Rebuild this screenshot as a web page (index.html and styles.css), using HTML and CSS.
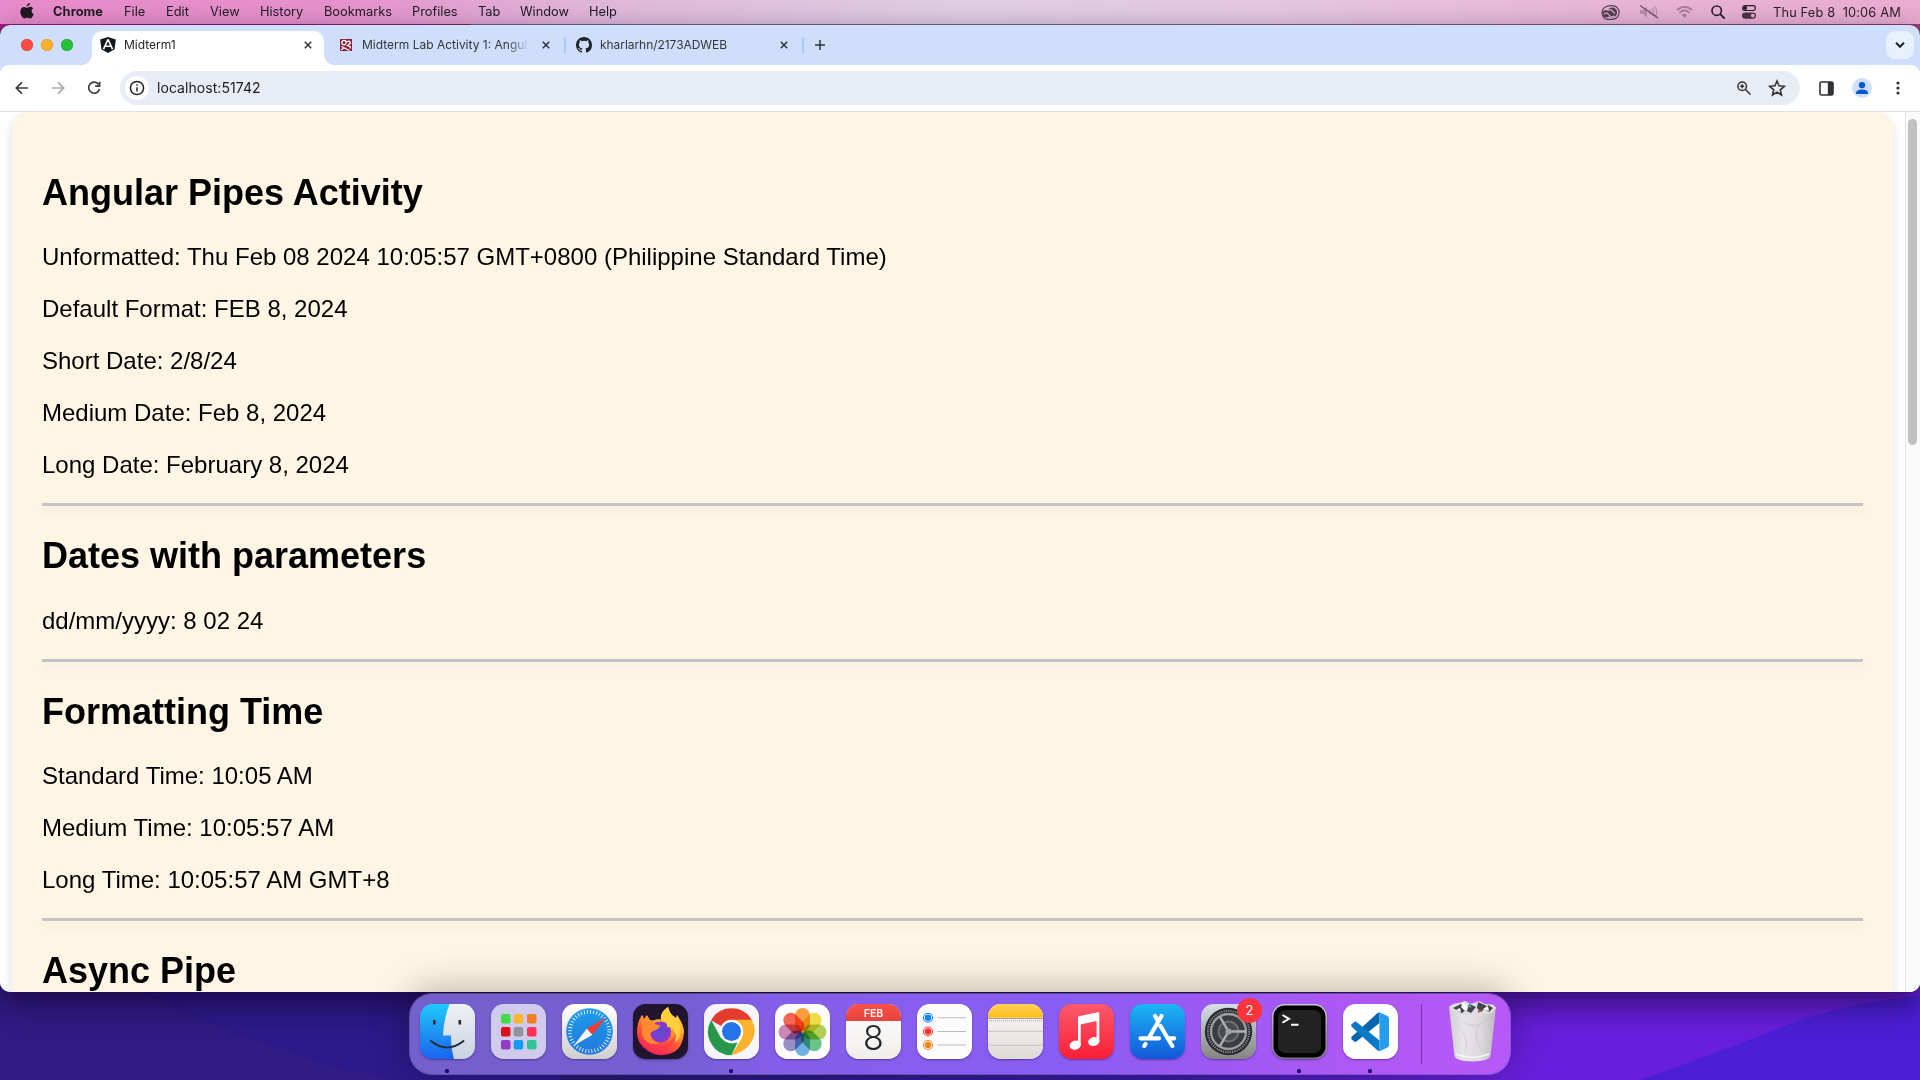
FILE: index.html
```html
<!DOCTYPE html>
<html lang="en">
<head>
<meta charset="utf-8">
<title>Midterm1</title>
<link rel="stylesheet" href="styles.css">
</head>
<body>
<svg class="wallpaper" viewBox="0 0 1920 90" preserveAspectRatio="none" aria-hidden="true">
  <path d="M0 0H140Q230 50 400 90H0z" fill="#311b85"/>
  <path d="M140 0Q230 42 330 76L400 90H560V0z" fill="#2c1a8a"/>
  <path d="M1500 0H1920V6Q1850 12 1790 34Q1720 62 1640 90H1500z" fill="#681fdc"/>
  <path d="M1920 6Q1850 12 1790 34Q1720 62 1640 90H1920z" fill="#4b1fd6"/>
</svg>

<header class="menubar">
  <nav class="menus">
    <svg class="apple" viewBox="0 0 14 16"><path d="M9.9 0c.1 1.500-1.400 3.200-3 3.200C6.700 1.700 8.300.2 9.900 0zM13.200 5.400c-2.300 1.400-1.900 4.500.5 5.500-.6 1.900-2 4.600-3.600 4.600-1.100 0-1.500-.7-2.800-.7s-1.800.7-2.800.7C2.300 15.500.300 11.500.300 8.600c0-3 1.900-4.700 3.800-4.700 1.200 0 2.200.8 3 .8.700 0 1.900-.9 3.400-.9 1.100 0 2.100.6 2.700 1.600z"/></svg>
    <b>Chrome</b><span>File</span><span>Edit</span><span>View</span><span>History</span><span>Bookmarks</span><span>Profiles</span><span>Tab</span><span>Window</span><span>Help</span>
  </nav>
  <div class="status">
    <svg class="cc" viewBox="0 0 21 15"><path d="M7.500 14.300a6.800 6.800 0 0 1-.6-12.500Q9.500.7 13.300.7a6.800 6.800 0 0 1 0 13.600z" fill="none" stroke="currentColor" stroke-width="1.200"/><circle cx="13.200" cy="7.500" r="4.900" fill="currentColor"/><circle cx="7.300" cy="8.800" r="3.700" fill="currentColor"/><path d="M4.800 9.700q1.500-3 4-1l2.500 2.400q2.500 1.500 4-.5M8.500 6q2-2.500 4.500-.3l3 2.800" fill="none" stroke="#e8b8d6" stroke-width="1.100"/></svg>
    <svg class="mute" viewBox="0 0 20 14"><path d="M1 5h3l4-3.500v11L4 9H1z" fill="#b88fab"/><path d="M10.500 4.500q2 2.500 0 5M13 3q3 4 0 8M15.500 1.500q4.500 5.500 0 11" fill="none" stroke="#b88fab" stroke-width="1.300"/><path d="M1 .5l18 12.500" stroke="#66495f" stroke-width="1.100"/></svg>
    <svg class="wifi" viewBox="0 0 17 12"><path d="M1 4Q8.500-2.500 16 4M3.500 6.700q5-4.200 10 0" fill="none" stroke="#a67f9b" stroke-width="1.900"/><path d="M5.800 9q2.700-2.400 5.400 0L8.500 11.800z" fill="#a67f9b"/></svg>
    <svg class="search" viewBox="0 0 14 14"><circle cx="5.700" cy="5.700" r="4.700" fill="none" stroke="currentColor" stroke-width="1.600"/><path d="M9.200 9.200l4 4" stroke="currentColor" stroke-width="1.800" stroke-linecap="round"/></svg>
    <svg class="control" viewBox="0 0 14 14"><rect x=".6" y=".6" width="12.800" height="4.900" rx="2.450" fill="none" stroke="currentColor" stroke-width="1.200"/><circle cx="3.200" cy="3" r="2" fill="currentColor"/><rect y="7.500" width="14" height="6.200" rx="3.100" fill="#4a3444"/><circle cx="10.800" cy="10.600" r="1.900" fill="#e9b1d0"/></svg>
    <time>Thu Feb 8&nbsp; 10:06 AM</time>
  </div>
</header>

<main class="window">
  <div class="tabstrip">
    <div class="lights"><i class="red"></i><i class="amber"></i><i class="green"></i></div>
    <div class="tab active">
      <svg class="favicon" viewBox="0 0 16 16"><path d="M8 0l7.800 2.600-1.200 9.600L8 16l-6.600-3.800L.2 2.600z" fill="#11161b"/><path d="M8 2.300L3.500 12.200M8 2.300l4.500 9.900M5.200 9.200h5.600" fill="none" stroke="#fff" stroke-width="1.600"/></svg>
      <span class="title">Midterm1</span>
      <svg class="close" viewBox="0 0 8 8"><path d="M.8.8l6.400 6.400M7.200.8L.8 7.200"/></svg>
    </div>
    <div class="tab second">
      <svg class="favicon small" viewBox="0 0 12 12"><path fill="#8a1f37" d="M0 0h12v12H0z"/><circle cx="4" cy="3.600" r="2.200" fill="none" stroke="#fff" stroke-width="1.300"/><path d="M1.500 7.500l8 4M6.500 3q3-2 4 1l-3 2.500q3 0 3 3M1 11l3-2" fill="none" stroke="#fff" stroke-width="1.300"/></svg>
      <span class="title fade">Midterm Lab Activity 1: Angul</span>
      <svg class="close" viewBox="0 0 8 8"><path d="M.8.8l6.400 6.400M7.200.8L.8 7.200"/></svg>
    </div>
    <i class="divider"></i>
    <div class="tab third">
      <svg class="favicon" viewBox="0 0 16 16"><path fill="#1f2328" d="M8 0C3.580 0 0 3.580 0 8c0 3.540 2.290 6.530 5.470 7.590.4.070.55-.17.55-.38 0-.19-.01-.82-.01-1.490-2.010.37-2.530-.49-2.690-.94-.09-.23-.48-.94-.82-1.130-.28-.15-.68-.52-.01-.53.63-.01 1.080.58 1.230.82.72 1.210 1.870.87 2.330.66.07-.52.28-.87.51-1.070-1.780-.2-3.640-.89-3.640-3.950 0-.87.31-1.590.82-2.150-.08-.2-.36-1.020.08-2.120 0 0 .67-.21 2.200.82a7.600 7.600 0 0 1 4 0c1.530-1.040 2.200-.82 2.200-.82.44 1.100.16 1.920.08 2.120.51.56.82 1.270.82 2.150 0 3.070-1.870 3.750-3.650 3.950.29.25.54.73.54 1.480 0 1.070-.01 1.930-.01 2.200 0 .21.15.46.55.38A8 8 0 0 0 16 8c0-4.420-3.580-8-8-8z"/></svg>
      <span class="title">kharlarhn/2173ADWEB</span>
      <svg class="close" viewBox="0 0 8 8"><path d="M.8.8l6.400 6.400M7.200.8L.8 7.200"/></svg>
    </div>
    <i class="divider"></i>
    <svg class="plus" viewBox="0 0 10 10"><path d="M5 0v10M0 5h10"/></svg>
    <div class="tabsearch"><svg viewBox="0 0 10 6"><path d="M1 .8l4 4 4-4"/></svg></div>
  </div>

  <div class="toolbar">
    <div class="navbtns">
      <svg viewBox="0 0 14 14"><path d="M13 7H1.500M7 1.300L1.300 7 7 12.700"/></svg>
      <svg class="off" viewBox="0 0 14 14"><path d="M1 7h11.500M7 1.300L12.700 7 7 12.700"/></svg>
      <svg viewBox="0 0 14 14"><path d="M11.700 3.600A5.500 5.500 0 1 0 12.500 8M12.600.8v4.400H8.200"/></svg>
    </div>
    <div class="omnibox">
      <span class="info"><svg viewBox="0 0 16 16"><circle cx="8" cy="8" r="6.600" fill="none" stroke="#222" stroke-width="1.500"/><path d="M8 7.200v4.300M8 4.300v1.500" stroke="#222" stroke-width="1.500"/></svg></span>
      <span class="url">localhost:51742</span>
      <svg class="zoomicon" viewBox="0 0 14 14"><circle cx="5.200" cy="5.200" r="4.300"/><path d="M8.500 8.500l5 5M5.200 3.200v4M3.200 5.200h4"/></svg>
      <svg class="star" viewBox="0 0 16 16"><path d="M8 1.800l1.800 4.300 4.700.4-3.600 3.100 1.100 4.600L8 11.700l-4 2.500 1.100-4.600L1.500 6.500l4.700-.4z"/></svg>
    </div>
    <svg class="panel" viewBox="0 0 15 15"><rect x="1" y="1" width="13" height="13" rx="1.500" fill="none" stroke="#303235" stroke-width="1.600"/><path d="M8.800 1H14v13H8.800z" fill="#303235"/></svg>
    <svg class="avatar" viewBox="0 0 20 20"><circle cx="10" cy="10" r="10" fill="#cfe0fb"/><circle cx="10" cy="7.100" r="3.200" fill="#0b57d0"/><path d="M4 15.900v-1.500Q5 11.500 10 11.500t6 2.900v1.500z" fill="#0b57d0"/></svg>
    <svg class="kebab" viewBox="0 0 4 14"><circle cx="2" cy="2" r="1.600"/><circle cx="2" cy="7" r="1.600"/><circle cx="2" cy="12" r="1.600"/></svg>
  </div>

  <div class="viewport">
    <div class="page">
      <article class="card">
        <h2>Angular Pipes Activity</h2>
        <p>Unformatted: Thu Feb 08 2024 10:05:57 GMT+0800 (Philippine Standard Time)</p>
        <p>Default Format: FEB 8, 2024</p>
        <p>Short Date: 2/8/24</p>
        <p>Medium Date: Feb 8, 2024</p>
        <p>Long Date: February 8, 2024</p>
        <hr>
        <h2>Dates with parameters</h2>
        <p>dd/mm/yyyy: 8 02 24</p>
        <hr>
        <h2>Formatting Time</h2>
        <p>Standard Time: 10:05 AM</p>
        <p>Medium Time: 10:05:57 AM</p>
        <p>Long Time: 10:05:57 AM GMT+8</p>
        <hr>
        <h2>Async Pipe</h2>
      </article>
    </div>
    <div class="scrollbar"><i></i></div>
  </div>
</main>

<footer class="dock">
  <div class="app running">
    <svg viewBox="0 0 55 55">
      <defs><linearGradient id="fb" x2="0" y2="1"><stop stop-color="#21c8f8"/><stop offset="1" stop-color="#1a63ee"/></linearGradient><linearGradient id="fw" x2="0" y2="1"><stop stop-color="#f1f1f5"/><stop offset="1" stop-color="#c9d3e0"/></linearGradient><clipPath id="r"><rect width="55" height="55" rx="12.500"/></clipPath></defs>
      <g clip-path="url(#r)"><path fill="url(#fb)" d="M0 0h55v55H0z"/><path fill="url(#fw)" d="M29.500 0Q23.500 16 23 31.500h8Q31 44 34 55h21V0z"/></g>
      <path d="M14.300 16v4.500M39.800 16v4.500" stroke="#222c36" stroke-width="2.600"/><path d="M11 37q16 13 32.500 0" fill="none" stroke="#222c36" stroke-width="2" stroke-linecap="round"/>
    </svg>
  </div>
  <div class="app">
    <svg viewBox="0 0 55 55"><rect width="55" height="55" rx="12.500" fill="#d0cbec"/>
      <g><rect x="10" y="10" width="9.500" height="9.500" rx="2" fill="#42dc48"/><rect x="22.700" y="10" width="9.500" height="9.500" rx="2" fill="#fab62c"/><rect x="36" y="10" width="9.500" height="9.500" rx="2" fill="#f17e25"/><rect x="10" y="23" width="9.500" height="9.500" rx="2" fill="#d91217"/><rect x="22.700" y="23" width="9.500" height="9.500" rx="2" fill="#8f9699"/><rect x="36" y="23" width="9.500" height="9.500" rx="2" fill="#fc3155"/><rect x="10" y="36" width="9.500" height="9.500" rx="2" fill="#943bc5"/><rect x="22.700" y="36" width="9.500" height="9.500" rx="2" fill="#139bf0"/><rect x="36" y="36" width="9.500" height="9.500" rx="2" fill="#32c497"/></g></svg>
  </div>
  <div class="app">
    <svg viewBox="0 0 55 55"><defs><linearGradient id="sg" x2="0" y2="1"><stop stop-color="#fff"/><stop offset="1" stop-color="#cfcfcf"/></linearGradient><linearGradient id="sb" x2="0" y2="1"><stop stop-color="#1d9bea"/><stop offset="1" stop-color="#2378dc"/></linearGradient></defs>
      <rect width="55" height="55" rx="12.500" fill="url(#sg)"/><circle cx="27.500" cy="27.500" r="23.300" fill="url(#sb)"/><circle cx="27.500" cy="27.500" r="19.700" fill="none" stroke="#e7f4fd" stroke-width="3.800" stroke-dasharray=".9 2.195"/>
      <path d="M12 41.500l18.500-10.800-5.700-6.200z" fill="#f6f6f6"/><path d="M44 13.500L24.800 24.500l5.700 6.200z" fill="#ef3c35"/></svg>
  </div>
  <div class="app">
    <svg viewBox="0 0 55 55"><defs><linearGradient id="ff" x1=".8" y1="0" x2=".3" y2="1"><stop stop-color="#ffe043"/><stop offset=".35" stop-color="#ffad2c"/><stop offset=".65" stop-color="#ff5535"/><stop offset="1" stop-color="#f51b62"/></linearGradient><radialGradient id="fp"><stop stop-color="#574bd6"/><stop offset="1" stop-color="#8f36c9"/></radialGradient></defs>
      <rect width="55" height="55" rx="12.500" fill="#20142f"/>
      <path d="M4 28Q4 18 9 11q1 .5 2 4l3-4 3 5 3 .5q5-2 8-1-1-7 7-12.500 2 8 8 11l1-3q7 10 7 17-1 15-10 20-13 7-26-1Q4 40 4 28z" fill="url(#ff)"/>
      <circle cx="27.500" cy="28" r="10.500" fill="url(#fp)"/>
      <path d="M9 16q8 4 18 5 0 4-7 6-4 2-2 6 2 5 9 6-13 4-18-8z" fill="#ff8a32"/>
      <path d="M28 15.500Q27 8 35 3q2 8 8 11 6 8 4 17-1 5-5 7 2-9-3-14-2-1-5-1 1-5-6-7.500z" fill="#ffcf3e"/>
      <path d="M5 30q4 13 17 12 15 1 21-13 0 17-17 19Q11 49 5 30z" fill="#fc384a" opacity=".6"/></svg>
  </div>
  <div class="app running">
    <svg viewBox="0 0 55 55"><rect width="55" height="55" rx="12.500" fill="#f6f5fb"/>
      <path d="M27.500 28L7.100 16.200a23.500 23.500 0 0 1 40.800 0z" fill="#e33b2e"/><path d="M27.500 51.300A23.500 23.500 0 0 1 7.200 16l9.800 18 10.500 5.600 6-1z" fill="#29974b"/><path d="M27.500 15.800h20.400q2.900 5.500 2.900 12Q48 46 27.500 51.300l10.600-17.500z" fill="#fcb22d"/><circle cx="27.500" cy="27.500" r="11.800" fill="#fff"/><circle cx="27.500" cy="27.500" r="9.500" fill="#2473e8"/></svg>
  </div>
  <div class="app">
    <svg viewBox="0 0 55 55"><rect width="55" height="55" rx="12.500" fill="#fdfdfd"/>
      <g class="petals"><rect x="20" y="4" width="15" height="23.500" rx="7.500" fill="#fb9325"/><rect x="20" y="4" width="15" height="23.500" rx="7.500" fill="#eddb2f" transform="rotate(45 27.500 28)"/><rect x="20" y="4" width="15" height="23.500" rx="7.500" fill="#abcc3d" transform="rotate(90 27.500 28)"/><rect x="20" y="4" width="15" height="23.500" rx="7.500" fill="#59bd78" transform="rotate(135 27.500 28)"/><rect x="20" y="4" width="15" height="23.500" rx="7.500" fill="#5da9df" transform="rotate(180 27.500 28)"/><rect x="20" y="4" width="15" height="23.500" rx="7.500" fill="#8a80c2" transform="rotate(225 27.500 28)"/><rect x="20" y="4" width="15" height="23.500" rx="7.500" fill="#c679ad" transform="rotate(270 27.500 28)"/><rect x="20" y="4" width="15" height="23.500" rx="7.500" fill="#f8513f" transform="rotate(315 27.500 28)"/></g></svg>
  </div>
  <div class="app calendar"><span class="month">FEB</span><span class="day">8</span></div>
  <div class="app">
    <svg viewBox="0 0 55 55"><rect width="55" height="55" rx="12.500" fill="#fcfcfc"/><g stroke="#b9bbc1" stroke-width="1"><path d="M20.500 13.800H49M20.500 27.500H49M20.500 41H49"/></g>
      <g fill="none" stroke-width="1.100"><circle cx="11" cy="13.800" r="4.500" stroke="#1184fa"/><circle cx="11" cy="27.500" r="4.500" stroke="#f5413a"/><circle cx="11" cy="41" r="4.500" stroke="#f08b2a"/></g><circle cx="11" cy="13.800" r="3.200" fill="#1184fa"/><circle cx="11" cy="27.500" r="3.200" fill="#f5332f"/><circle cx="11" cy="41" r="3.200" fill="#ee8421"/></svg>
  </div>
  <div class="app">
    <svg viewBox="0 0 55 55"><defs><linearGradient id="ny" x2="0" y2="1"><stop stop-color="#ffd157"/><stop offset="1" stop-color="#ffbc1c"/></linearGradient><linearGradient id="nw" x2="0" y2="1"><stop stop-color="#fbfafa"/><stop offset="1" stop-color="#dedad8"/></linearGradient></defs><g clip-path="url(#r)"><path fill="url(#nw)" d="M0 0h55v55H0z"/><path fill="url(#ny)" d="M0 0h55v13.800H0z"/><path d="M0 14.500h55" stroke="#a6a29a" stroke-width="1"/><path d="M1 16.800h53" stroke="#bdbbb8" stroke-width="1.400" stroke-dasharray="1 1"/><path d="M0 27.300h55M0 41.300h55" stroke="#c6c3c1"/></g></svg>
  </div>
  <div class="app">
    <svg viewBox="0 0 55 55"><defs><linearGradient id="mu" x2="0" y2="1"><stop stop-color="#fb5a6c"/><stop offset="1" stop-color="#fa1f35"/></linearGradient></defs><rect width="55" height="55" rx="12.500" fill="url(#mu)"/><path d="M19 13.500q0-1 1-1.300L39 8.200q1.300-.2 1.300 1V37.500h-2.700V17L21.700 20.500V41H19z" fill="#fff"/><ellipse cx="16.200" cy="41.200" rx="5.700" ry="4.500" fill="#fff" transform="rotate(-15 16.200 41.200)"/><ellipse cx="34.800" cy="37.500" rx="5.700" ry="4.500" fill="#fff" transform="rotate(-15 34.800 37.500)"/></svg>
  </div>
  <div class="app">
    <svg viewBox="0 0 55 55"><defs><linearGradient id="as" x2="0" y2="1"><stop stop-color="#1cb6f3"/><stop offset="1" stop-color="#1257d8"/></linearGradient></defs><rect width="55" height="55" rx="12.500" fill="url(#as)"/><g stroke="#fff" stroke-width="4.200" stroke-linecap="round"><path d="M31.500 12L19 33.700M25 12l2.400 4.200M30.500 22l11.800 20M10.500 34.300H29M37.500 34.300h6.700M15.500 40l-1.200 2"/></g></svg>
  </div>
  <div class="app">
    <svg viewBox="0 0 55 55"><defs><linearGradient id="se" x2="0" y2="1"><stop stop-color="#d4dfe7"/><stop offset="1" stop-color="#858483"/></linearGradient></defs><rect width="55" height="55" rx="12.500" fill="url(#se)"/><circle cx="27.500" cy="27.500" r="23.700" fill="#292a2d"/><circle cx="27.500" cy="27.500" r="20.700" fill="none" stroke="#8b8d90" stroke-width="2" stroke-dasharray="1.200 1.100"/><circle cx="27.500" cy="27.500" r="17.500" fill="#3a3c3f" stroke="#999b9e" stroke-width="2.400"/><circle cx="27.500" cy="27.500" r="10" fill="#4b4c50" stroke="#6d6f72" stroke-width="2"/><path d="M27.500 27.500H45M27.500 27.500L18.700 12.500M27.500 27.500L18.700 42.500" stroke="#b0b1b3" stroke-width="2.400"/><circle cx="27.500" cy="27.500" r="3" fill="#a0a1a4"/></svg>
    <span class="badge">2</span>
  </div>
  <div class="app running">
    <svg viewBox="0 0 55 55"><defs><linearGradient id="te" x2="0" y2="1"><stop stop-color="#c5ccd3"/><stop offset="1" stop-color="#777a7a"/></linearGradient></defs><rect width="55" height="55" rx="12.500" fill="url(#te)"/><rect x="1.500" y="1.500" width="52" height="52" rx="11" fill="#030303"/><rect x="6" y="6" width="43" height="43" rx="7" fill="#222"/><path d="M10.500 11l6.500 3.800-6.500 3.800M19 20.700h7.500" fill="none" stroke="#fff" stroke-width="2"/></svg>
  </div>
  <div class="app running">
    <svg viewBox="0 0 55 55"><rect width="55" height="55" rx="12.500" fill="#fff"/><path d="M36.500 8.500V19L13.500 37.500q-1.200.8-2.300 0L8.700 35.200q-1.100-1.200 0-2.400L34 9.500q1.200-1 2.500-1z" fill="#0766ad"/><path d="M36.500 47V36.500L13.500 18q-1.200-.8-2.300 0l-2.500 2.300q-1.100 1.200 0 2.400L34 46q1.200 1 2.500 1z" fill="#097ac8"/><path d="M34 9.500q1.300-1.700 3.500-.800l7 3.400q1.500.8 1.500 2.400v26.500q0 1.600-1.500 2.400l-7 3.400q-2.200.9-3.500-.800 2 1 2.500-1.500V11q-.5-2.500-2.500-1.500z" fill="#269cee"/></svg>
  </div>
  <i class="rule"></i>
  <div class="trash">
    <svg viewBox="0 0 49 62"><defs><linearGradient id="tr"><stop stop-color="#cfccd1"/><stop offset=".3" stop-color="#e8e6e8"/><stop offset=".7" stop-color="#dad8da"/><stop offset="1" stop-color="#bdb9c0"/></linearGradient></defs><path d="M1 7q23 8 47 0l-5.500 49Q41 61 24.500 61.500 8 61 6.500 56z" fill="url(#tr)"/><path d="M1 7Q5 3 11 3l6-2 6 3 8-3 6 3 8 .5 3 3-3 5q-20 5-41 0z" fill="#dddbde"/><path d="M5 8l8-4 5 6-4 3zM21 4l7 3-5 6-4-2zM30 2l9 4-6 6-4-4zM40 5l5 3-4 4-3-2z" fill="#43454c"/><path d="M15 3l6 3-4 5-4-4zM35 9l5-3 1 5zM8 10l4-2 1 4z" fill="#fff"/><path d="M18 6l4-1 2 3z" fill="#3eb4a6"/><path d="M30 9l4 2-4 2z" fill="#ba5c4b"/><path d="M15 22q13 8 24-3M14 31q7 10 3 22M31 24q-7 16 4 27" fill="none" stroke="#c3bfc4" stroke-width="2" opacity=".35"/><path d="M8 54q16 7 33 0" fill="none" stroke="#f7f6f7" stroke-width="1.500"/></svg>
  </div>
</footer>
</body>
</html>
```
FILE: styles.css
```css
* { box-sizing: border-box; }
html, body { margin: 0; height: 100%; overflow: hidden; }
body {
  position: relative;
  display: flex;
  flex-direction: column;
  align-items: center;
  background: linear-gradient(90deg, #a01c86 0, #8c2468 22%, #8e3040 24.400%, #777086 24.600%, #84718f 60%, #8d5a7d 85%, #9d3c74 100%) top / 100% 40px no-repeat, linear-gradient(90deg, #2e1a88, #241973 30%, #3b1aa4 60%, #6c1fdd 80%, #6420df);
  font-family: Inter, "Noto Sans", sans-serif;
  font-size: 13px;
  color: #1d1a20;
}
.wallpaper { position: absolute; left: 0; bottom: 0; width: 1920px; height: 90px; }
svg { display: block; flex: none; }

/* menu bar */
.menubar {
  width: 100%;
  height: 24px;
  flex: none;
  display: flex;
  justify-content: space-between;
  background: linear-gradient(90deg, #e98bcb 0, #e692ce 18%, #e1b8db 31%, #e0cee2 50%, #e6c9e1 65%, #e8b5d6 85%, #ebaccf 100%);
  line-height: 23px;
  font-size: 12.800px;
  white-space: nowrap;
}
.menus {
  display: grid;
  grid-template-columns: 33px 71px 42px 44px 50px 64px 88px 66px 42px 69px 40px;
  padding-left: 20px;
}
.menus b { letter-spacing: .1px; }
.apple { width: 14px; height: 16px; margin-top: 3px; fill: #211820; }
.status { display: flex; align-items: center; padding-right: 17px; color: #2a1d28; }
.cc { width: 21px; height: 15px; color: #54404f; }
.mute { width: 20px; height: 14px; margin-left: 19px; }
.wifi { width: 17px; height: 12px; margin-left: 17px; }
.search { width: 14px; height: 14px; margin-left: 18px; }
.control { width: 14px; height: 14px; margin-left: 17px; }
.status time { width: 130px; margin-left: 17px; text-align: left; letter-spacing: .15px; }

/* browser window */
.window {
  position: relative;
  width: 1920px;
  height: 967px;
  margin-top: 1px;
  flex: none;
  display: flex;
  flex-direction: column;
  border-radius: 10px;
  overflow: hidden;
  background: #cfdffb;
  box-shadow: 0 0 1px #000, 0 12px 32px rgba(15, 0, 35, .6);
}
.tabstrip { display: flex; align-items: center; height: 40px; flex: none; }
.lights { display: flex; gap: 8px; padding-left: 21px; width: 92px; }
.lights i { width: 12px; height: 12px; border-radius: 50%; }
.red { background: #fb4b48; box-shadow: inset 0 0 0 .5px #d33b38; }
.amber { background: #fdb02c; box-shadow: inset 0 0 0 .5px #d99221; }
.green { background: #27c038; box-shadow: inset 0 0 0 .5px #1d9d2b; }
.tab { display: flex; align-items: center; color: #33363a; font-size: 12px; }
.active {
  position: relative;
  width: 232px;
  height: 34px;
  align-self: flex-end;
  padding: 0 12px 6px 8px;
  border-radius: 10px 10px 0 0;
  background: #fff;
  color: #1f1f1f;
}
.active::before, .active::after {
  content: "";
  position: absolute;
  bottom: 0;
  width: 10px;
  height: 10px;
}
.active::before { left: -10px; background: radial-gradient(circle at 0 0, transparent 9.500px, #fff 10px); }
.active::after { right: -10px; background: radial-gradient(circle at 100% 0, transparent 9.500px, #fff 10px); }
.favicon { width: 16px; height: 16px; margin-right: 8px; }
.favicon.small { width: 12px; height: 12px; margin-right: 10px; }
.title { flex: 1; padding-bottom: 2px; white-space: nowrap; }
.fade { flex: none; width: 168px; margin-right: 12px; -webkit-mask: linear-gradient(90deg, #000 145px, transparent 168px); mask: linear-gradient(90deg, #000 145px, transparent 168px); }
.close { width: 8px; height: 8px; fill: none; stroke: #303235; stroke-width: 1.500; }
.second { width: 226px; padding-left: 16px; margin-right: 14px; }
.third { width: 212px; margin: 0 14px 0 10px; }
.third .title { letter-spacing: -.05px; }
.divider { width: 2px; height: 16px; background: #a6c8fb; }
.plus { width: 10px; height: 10px; margin-left: 11px; fill: none; stroke: #303235; stroke-width: 1.500; }
.tabsearch { display: grid; place-items: center; width: 28px; height: 28px; margin: 0 6px 0 auto; border-radius: 9px; background: #e8f0fd; }
.tabsearch svg { width: 10px; height: 6px; fill: none; stroke: #1f1f1f; stroke-width: 2; }

.toolbar {
  display: flex;
  align-items: center;
  height: 47px;
  flex: none;
  border-bottom: 1px solid #dcdee2;
  border-radius: 9px 9px 0 0;
  background: #fff;
}
.navbtns { display: flex; gap: 22px; width: 120px; padding-left: 15px; }
.navbtns svg { width: 14px; height: 14px; fill: none; stroke: #3a3c40; stroke-width: 1.700; }
.navbtns .off { stroke: #ababad; }
.omnibox { display: flex; align-items: center; width: 1680px; height: 34px; padding: 0 14px 0 5px; border-radius: 17px; background: #e8ecf5; }
.info { display: grid; place-items: center; width: 24px; height: 24px; border-radius: 50%; background: #fff; }
.info svg { width: 16px; height: 16px; }
.url { flex: 1; padding: 0 0 1px 8px; font-size: 14px; letter-spacing: .06px; }
.zoomicon { width: 14px; height: 14px; margin-right: 17px; fill: none; stroke: #303235; stroke-width: 1.500; }
.star { width: 18px; height: 18px; fill: none; stroke: #303235; stroke-width: 1.400; }
.panel { width: 15px; height: 15px; margin-left: 19px; }
.avatar { width: 20px; height: 20px; margin-left: 18px; }
.kebab { width: 4px; height: 14px; margin-left: 24px; fill: #303235; }

/* page content */
.viewport { display: flex; flex: 1; min-height: 0; background: #fff; }
.page { flex: 1; padding: 0 12px; overflow: hidden; }
.card {
  height: 1100px;
  padding: 61.100px 30px 0;
  border-radius: 15px 15px 0 0;
  background: #fff5e4;
  box-shadow: 0 6px 12px rgba(20, 20, 60, .15);
  color: #000;
  font-family: "Liberation Sans", Arial, sans-serif;
  font-size: 24px;
}
.card h2 { margin: 0 0 30px; font-size: 36px; line-height: 40.300px; }
.card p { margin: 0 0 24px; line-height: 28px; }
.card hr { height: 3px; margin: 0 0 30px; border: 0; background: #c4c4c8; box-shadow: 0 5px 8px rgba(0, 0, 0, .07); }
.scrollbar { width: 15px; padding: 7px 2px; border-left: 1px solid #e3e3e3; background: #fafafa; }
.scrollbar i { display: block; width: 9px; height: 326px; border-radius: 5px; background: #c1c1c1; }

/* dock */
.dock {
  position: relative;
  display: flex;
  align-items: flex-start;
  gap: 16px;
  width: 1102px;
  height: 82px;
  flex: none;
  margin-top: 1px;
  padding: 10px 0 0 10px;
  border: 1px solid rgba(255, 255, 255, .25);
  border-radius: 23px;
  background: linear-gradient(90deg, #7460ca 0, #755fd4 25%, #845ee9 33%, #8a5df2 60%, #9b59f3 72%, #ad58f3 85%, #b759f6);
  background-clip: padding-box;
  box-shadow: 0 -2px 38px rgba(0, 0, 0, .3);
}
.app { position: relative; width: 55px; height: 55px; flex: none; border-radius: 12.500px; box-shadow: 0 1px 2px rgba(20, 0, 50, .4); }
.app svg { width: 55px; height: 55px; }
.running::after { content: ""; position: absolute; left: 25px; top: 65px; width: 4px; height: 4px; border-radius: 1.500px; background: #1b0670; }
.petals rect { mix-blend-mode: multiply; opacity: .88; }
.calendar { overflow: hidden; background: linear-gradient(#fff, #f0eeec); text-align: center; color: #252525; }
.month { display: block; height: 17px; line-height: 19px; background: linear-gradient(#fb5049, #e4443f); color: #fff; font-size: 10.500px; font-weight: 600; }
.day { display: block; font-size: 34px; font-weight: 300; line-height: 34px; }
.badge { position: absolute; left: 36px; top: -6px; width: 25px; height: 25px; border-radius: 50%; background: #fb333a; color: #fff; font-size: 13px; line-height: 25px; text-align: center; }
.rule { width: 1px; height: 60px; margin-left: 7px; flex: none; background: #7e2fc0; }
.trash { margin: -4px 0 0 10px; }
.trash svg { width: 49px; height: 62px; }
```
